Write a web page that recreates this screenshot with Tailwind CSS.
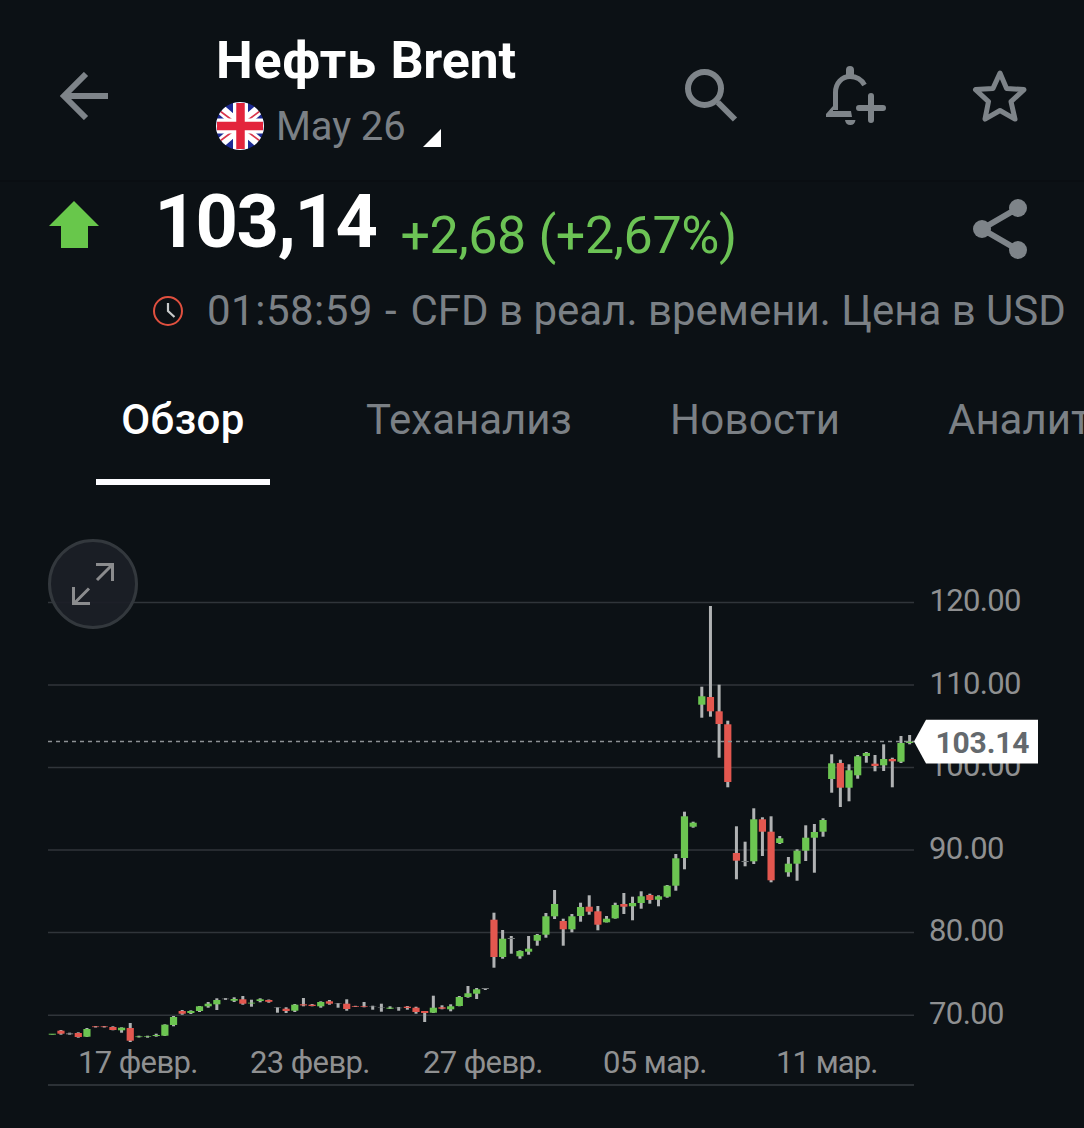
<!DOCTYPE html>
<html lang="ru">

<head>
  <meta charset="utf-8">
  <title>Нефть Brent</title>
  <script src="https://cdn.jsdelivr.net/npm/@tailwindcss/browser@4"></script>
</head>

<body class="bg-[#0c1115] font-['Roboto','Noto_Sans',sans-serif] text-[#7b8085] overflow-hidden">
<div class="w-[1084px] h-[1128px] overflow-hidden flex flex-col">

  <header class="h-[182px] shrink-0 flex border-b-2 border-[#0a0e12]">
    <svg class="w-[48px] h-[48px] mt-[72px] ml-[60px] shrink-0" viewBox="0 0 48 48" fill="none" stroke="#7e8489" stroke-width="6">
      <path d="M48 24H5M26 2L4 24l22 22"/>
    </svg>
    <div class="ml-[108px] w-[468px] pt-[31px] shrink-0">
      <h1 class="text-[52px] leading-[60px] font-bold text-white whitespace-nowrap"><span class="tracking-[0.75px]">Нефть </span><span class="tracking-[-0.25px]">Brent</span></h1>
      <div class="flex mt-[11px]">
        <svg class="w-[48px] h-[48px] shrink-0" viewBox="0 0 48 48">
          <clipPath id="flag"><circle cx="24" cy="24" r="24"/></clipPath>
          <g clip-path="url(#flag)">
            <path fill="#1c2a92" d="M0 0h48v48H0z"/>
            <path stroke="#fff" stroke-width="10" d="M0 3l48 42M48 3L0 45"/>
            <path stroke="#d9364c" stroke-width="1.6" d="M4 9l12 9M44 9l-12 9M4 39l12-9M44 39l-12-9"/>
            <path stroke="#fff" stroke-width="15" d="M24.500 0v48M0 24h48"/>
            <path stroke="#e3243c" stroke-width="8.500" d="M24.500 1v46M1 24h46"/>
          </g>
        </svg>
        <span class="ml-[12px] w-[129px] text-[40px] leading-[49px] tracking-[-0.1px] whitespace-nowrap">May 26</span>
        <svg class="w-[18px] h-[18px] mt-[27px] ml-[18px]" viewBox="0 0 18 18"><path fill="#fff" d="M18 0v18H0z"/></svg>
      </div>
    </div>
    <svg class="w-[54px] h-[54px] mt-[68px] shrink-0" viewBox="0 0 54 54" fill="none" stroke="#7e8489" stroke-width="6">
      <circle cx="20.500" cy="20.500" r="16.500"/>
      <path d="M34 34.500l17 17"/>
      <path stroke-width="3" d="M33.500 35.500l2-2"/>
    </svg>
    <svg class="w-[62px] h-[62px] mt-[65px] ml-[88px] shrink-0" viewBox="0 0 62 62">
      <path fill="none" stroke="#7e8489" stroke-width="5" d="M9.500 45V27.500C9.500 18 16 11.500 24 11.500c6.500 0 11.500 3 14.500 8.500"/>
      <path fill="#7e8489" d="M20 12V5a4 4 0 0 1 8 0v7zM0 52v-3l7-8v5h18l1 6zM19 55h10.500a5.300 5.800 0 0 1-10.500 0z"/>
      <path fill="none" stroke="#7e8489" stroke-width="6" stroke-linecap="round" d="M45 31v24M33 43h24"/>
    </svg>
    <svg class="w-[56px] h-[54px] mt-[70px] ml-[84px] shrink-0" viewBox="0 0 56 54" fill="none" stroke="#7e8489" stroke-width="5" stroke-linejoin="round">
      <path d="M28 3l6.600 15.400 17.400 1.200-13 12 4 17.500L28 40.500l-15 8.600 3.500-17.500L3.500 19.600l17.500-1.200z"/>
    </svg>
  </header>

  <section class="h-[176px] shrink-0">
    <div class="flex h-[94px]">
      <svg class="w-[50px] h-[47px] mt-[19px] ml-[48.500px] shrink-0" viewBox="0 0 50 47"><path fill="#68c74b" d="M25 0l25 25H39v22H12V25H0z"/></svg>
      <div class="flex items-start ml-[56px] w-[818.500px] whitespace-nowrap">
        <span class="w-[224px] text-[74px] leading-[80px] font-bold text-white tracking-[-1.4px]">103,14</span>
        <span class="ml-[22px] pt-[17px] text-[52px] leading-[74px] text-[#6cc355] tracking-[-0.4px]">+2,68 (+2,67%)</span>
      </div>
      <svg class="w-[54px] h-[62px] mt-[16px] shrink-0" viewBox="0 0 54 62">
        <path fill="none" stroke="#7e8489" stroke-width="6" d="M45 10L9 31l36 21"/>
        <g fill="#7e8489"><circle cx="45" cy="10" r="9"/><circle cx="9" cy="31" r="9"/><circle cx="45" cy="52" r="9"/></g>
      </svg>
    </div>
    <div class="flex items-center h-[70px] pl-[153px] whitespace-nowrap">
      <svg class="w-[30px] h-[30px] shrink-0" viewBox="0 0 30 30" fill="none">
        <circle cx="15" cy="15" r="14" stroke="#e0503f" stroke-width="2"/>
        <path d="M15 7v8l6.500 6" stroke="#c8cacb" stroke-width="2.200"/>
      </svg>
      <p class="ml-[24px] text-[42px] leading-[50px]"><span class="tracking-[0.5px]">01:58:59</span><span class="tracking-[1.7px]"> - </span>CFD в реал. времени. Цена в USD</p>
    </div>
  </section>

  <nav class="h-[127px] shrink-0 flex text-[42px] leading-[48px] pl-[96px] whitespace-nowrap overflow-hidden">
    <a class="w-[174px] shrink-0 flex justify-center pt-[38px] font-medium text-white border-b-6 border-[#fcfcff] tracking-[0.4px]">Обзор</a>
    <a class="ml-[96px] w-[304px] shrink-0 pt-[38px]">Теханализ</a>
    <a class="w-[278px] shrink-0 pt-[38px] tracking-[0.3px]">Новости</a>
    <a class="shrink-0 pt-[38px]">Аналитика</a>
  </nav>

  <svg id="chart" class="w-[1084px] h-[643px] shrink-0" viewBox="0 485 1084 643">
    <g id="grid"></g>
    <g id="candles"></g>
    <path stroke="#8d9194" stroke-width="1.500" stroke-dasharray="4 4" d="M48 741.500h866"/>
    <path stroke="#2c3136" stroke-width="2" d="M48 1085h866"/>
    <g>
      <circle cx="93" cy="584" r="43.500" fill="#1c1f27" fill-opacity=".93" stroke="#33383d" stroke-width="3"/>
      <path fill="none" stroke="#8b8c8e" stroke-width="3" d="M96 564.500h16.500V581M97 580l15-15M73.500 587v16.500H90M89 588.500l-15 15"/>
    </g>
    <path fill="#fff" d="M914 741.500l12-21.800h112v43.800H926z"/>
    <text x="935.500" y="752.500" font-size="30" font-weight="700" fill="#64696d" textLength="94" lengthAdjust="spacing">103.14</text>
  </svg>
</div>

<script>
  const NS = 'http://www.w3.org/2000/svg';
  const GREEN = '#6cc551';
  const RED = '#e3574f';
  const GREY = '#777b7c';

  // [color, body top, body bottom, wick top, wick bottom]
  const candles = [
    ['g', 1033.7, 1034.7, 1034, 1034.5], ['r', 1030.7, 1033.7, 1030, 1034.7], ['w', 1033.3, 1034.3, 1032.7, 1034.7], ['r', 1033, 1037, 1032.3, 1037.7], ['g', 1029, 1036.7, 1028, 1037],
    ['r', 1026.4, 1027.1, 1026, 1027.5], ['r', 1026.4, 1027.1, 1026, 1027.5], ['r', 1027, 1030, 1026.3, 1030.3], ['g', 1027.7, 1030.3, 1027.3, 1032.7], ['r', 1028, 1040.7, 1023, 1042],
    ['g', 1036.4, 1037.1, 1035.7, 1037.5], ['g', 1036.4, 1037, 1035.7, 1037.7], ['g', 1035, 1036, 1033.7, 1036.7], ['g', 1024.7, 1035.7, 1024.3, 1036], ['g', 1017, 1025, 1016, 1026.3],
    ['r', 1011, 1013.7, 1010, 1014.7], ['g', 1011, 1013, 1010.3, 1014], ['g', 1006.3, 1011, 1006, 1012], ['g', 1003.7, 1006.3, 1002, 1007.7], ['g', 1000, 1004.3, 998.3, 1010],
    ['w', 998.6, 999.2, 998, 999.9], ['g', 999, 1000.7, 997.3, 1002], ['r', 999.3, 1003.7, 996, 1004.7], ['g', 1002.7, 1003.5, 999.7, 1006.7], ['g', 999.3, 1001, 998.3, 1002.3],
    ['r', 1000, 1001.8, 999.5, 1002.7], ['w', 1007.5, 1008, 1007.3, 1012.7], ['r', 1008.7, 1011, 1007.3, 1013], ['g', 1004.7, 1010.7, 1004, 1012], ['r', 1004.3, 1005.4, 998, 1006.3],
    ['r', 1004.7, 1006, 1004, 1006.3], ['g', 1002, 1006.3, 1001.3, 1007.7], ['r', 1001.3, 1003.7, 1000, 1004.7], ['w', 1003.5, 1004, 1003, 1007.7], ['r', 1003.7, 1009, 999.3, 1010.7],
    ['r', 1006, 1006.7, 1005.8, 1007], ['r', 1006.3, 1007, 1002, 1007.3], ['w', 1006, 1006.4, 1005.7, 1009.7], ['w', 1007, 1007.5, 1003.7, 1011.7], ['g', 1007.7, 1008.7, 1006.3, 1009],
    ['w', 1007.7, 1008.2, 1007, 1010.7], ['r', 1006.7, 1008, 1006, 1009.7], ['r', 1007.7, 1012, 1006.7, 1013.7], ['r', 1011, 1013, 1011, 1022], ['g', 1007.7, 1012.7, 995.7, 1013],
    ['r', 1007.3, 1008.7, 1005.3, 1009.3], ['g', 1006.3, 1009.3, 1004.3, 1011.3], ['g', 997, 1006, 996, 1006.3], ['g', 993.3, 997, 986, 997.7], ['g', 989.3, 993.7, 988, 999],
    ['w', 988, 989, 988, 990], ['r', 919.7, 957, 912.7, 967.7], ['g', 938.7, 957, 930, 958.7], ['w', 938, 939, 936, 953.7], ['g', 951, 956.3, 950.3, 958.7],
    ['g', 948.7, 951.7, 936, 954.7], ['g', 935, 940.7, 934, 945.7], ['g', 916.3, 934.7, 913, 937.7], ['g', 904, 916.3, 890, 919], ['r', 921, 929.3, 918.7, 945.7],
    ['g', 916.3, 929.3, 914, 932.3], ['g', 907, 916, 902.7, 921.7], ['r', 906.7, 911.7, 895.3, 914.7], ['r', 911.3, 924.7, 906, 930.3], ['g', 918.7, 922.3, 916, 922.5],
    ['g', 905, 918.3, 902.7, 918.7], ['r', 904, 906.7, 893, 914], ['g', 903, 906.3, 896.7, 920.3], ['g', 896.3, 903, 891.3, 908.7], ['r', 895, 900, 893.7, 903.7],
    ['g', 896.3, 899.7, 895.3, 906.3], ['g', 885.7, 896.7, 885, 897.7], ['g', 858.3, 885.7, 854, 890.7], ['g', 816.3, 858, 811.7, 869.3], ['g', 822.7, 826.7, 821.7, 827.7],
    ['g', 696.3, 704.7, 686.7, 717.7], ['r', 697, 711.3, 606, 716.7], ['r', 711.3, 724, 684.7, 757.7], ['r', 724.3, 782, 720.7, 787.3], ['r', 853, 860.7, 826.3, 879.3],
    ['w', 861, 862, 841.7, 866.3], ['g', 819.3, 861.3, 808.3, 864], ['r', 819.3, 831.7, 817.3, 856], ['r', 831.7, 880.3, 816.3, 882.3], ['g', 838.3, 843, 836, 844],
    ['g', 863.7, 872.3, 857, 876.7], ['g', 850.7, 863.7, 849.3, 880.7], ['g', 837.7, 850.7, 825.3, 861], ['g', 832, 837.7, 824, 872.7], ['g', 820, 831.7, 818.3, 836.7],
    ['g', 763.3, 779, 754.3, 792.7], ['r', 763, 787.7, 759.7, 807], ['g', 770.3, 787.7, 764.3, 801.3], ['g', 756.3, 775.3, 755, 778.7], ['g', 753, 756, 752, 762.7],
    ['r', 763.7, 766, 755, 771.3], ['g', 759, 765.3, 744.3, 771], ['r', 759, 761.3, 757.7, 787.3], ['g', 743, 761.7, 736, 763], ['g', 741.5, 743, 735, 744.3],
  ];

  function add(parent, name, attrs, text) {
    const el = document.createElementNS(NS, name);
    for (const key in attrs) el.setAttribute(key, attrs[key]);
    if (text) el.textContent = text;
    document.getElementById(parent).appendChild(el);
  }

  // price scale
  [120, 110, 100, 90, 80, 70].forEach((price, i) => {
    const y = 602.4 + i * 82.55;
    add('grid', 'path', {d: `M48 ${y}H914`, stroke: '#30353a', 'stroke-width': 1.5});
    add('grid', 'text', {
      x: price > 99 ? 929.5 : 929, y: y + 8.8, 'font-size': 31, fill: '#8f9091',
      textLength: price > 99 ? 92 : 75.5,
    }, price + '.00');
  });

  // dates
  [['17 февр.', 78, 120.5], ['23 февр.', 250, 120.5], ['27 февр.', 423, 120.5], ['05 мар.', 603, 104.5], ['11 мар.', 776, 102.5]].forEach(([label, x, w]) => {
    add('grid', 'text', {x: x, y: 1073, 'font-size': 31, fill: '#8f9091', textLength: w}, label);
  });

  candles.forEach(([color, top, bottom, high, low], i) => {
    const x = 52.3 + i * 8.66;
    add('candles', 'rect', {x: x - 1.5, y: high, width: 3, height: low - high, fill: '#b0b2b3'});
    add('candles', 'rect', {
      x: x - 3.6, y: top, width: 7.2, height: bottom - top,
      fill: color === 'g' ? GREEN : color === 'r' ? RED : GREY,
    });
  });
</script>
</body>

</html>
